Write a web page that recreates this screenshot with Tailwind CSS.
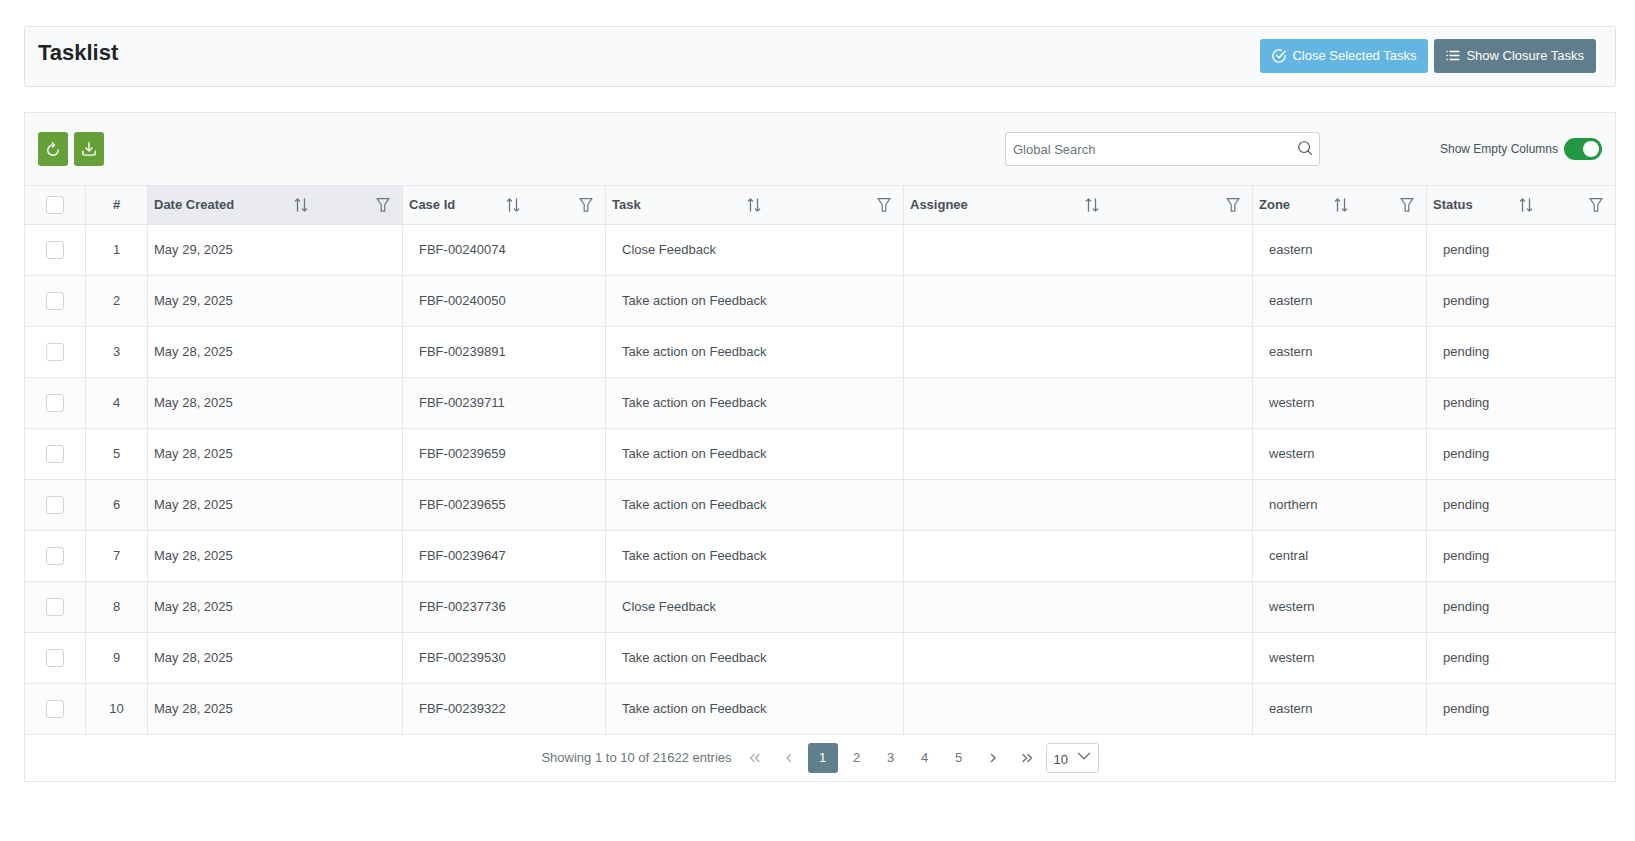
<!DOCTYPE html>
<html lang="en">

<head>
    <meta charset="UTF-8">
    <meta name="viewport" content="width=device-width, initial-scale=1.0">
    <title>Tasklist</title>
    <script src="https://cdn.jsdelivr.net/npm/@tailwindcss/browser@4"></script>
</head>

<body class="bg-white font-['Liberation_Sans',Arial,sans-serif] text-[13px] leading-5 text-[#495057]">
    <main class="pt-[26px] pb-6 pl-6 pr-[19px]">
        <!-- Page Header -->
        <header class="flex items-start justify-between rounded-[3px] border border-[#dee2e6] bg-[#f8fafc] pt-3 pb-[13px] pl-[13px] pr-[19px]">
            <h1 class="text-[22px] leading-7 font-bold text-[#212529]">Tasklist</h1>
            <div class="flex gap-1.5">
                <button type="button" class="flex h-[34px] items-center gap-1.5 rounded-[3px] bg-[#64b5e1] px-3 text-white">
                    <svg class="size-3.5" viewBox="0 0 16 16" fill="none" stroke="currentColor" stroke-width="1.5" stroke-linecap="round" stroke-linejoin="round">
                        <path d="M15 7.3V8a7 7 0 1 1-4.1-6.4" />
                        <path d="M5.2 7.2 8 10l7-7.4" />
                    </svg>
                    Close Selected Tasks
                </button>
                <button type="button" class="flex h-[34px] items-center gap-1.5 rounded-[3px] bg-[#607d8b] px-3 text-white">
                    <svg class="size-3.5" viewBox="0 0 14 14" fill="none" stroke="currentColor" stroke-width="1.3" stroke-linecap="round">
                        <path d="M4 2.5h9M4 6.5h9M4 10.5h9M1 2.5h.3M1 6.5h.3M1 10.5h.3" />
                    </svg>
                    Show Closure Tasks
                </button>
            </div>
        </header>

        <!-- Task Table -->
        <section class="mt-[25px] border border-[#e5e8eb]">
            <div class="flex items-center bg-[#f8fafc] px-[13px] py-[19px]">
                <div class="flex flex-1 gap-1.5">
                    <button type="button" aria-label="Refresh" class="flex h-[34px] w-[30px] items-center justify-center rounded-[3px] bg-[#66a038] text-white">
                        <svg class="size-3.5" viewBox="0 0 14 14" fill="none" stroke="currentColor" stroke-width="1.4" stroke-linecap="round" stroke-linejoin="round">
                            <path d="M8.2 2.9H7A5.2 5.2 0 1 0 12.2 8" />
                            <path d="M6.3.7 8.5 2.9 6.3 5.1" />
                        </svg>
                    </button>
                    <button type="button" aria-label="Download" class="flex h-[34px] w-[30px] items-center justify-center rounded-[3px] bg-[#66a038] text-white">
                        <svg class="size-3.5" viewBox="0 0 14 14" fill="none" stroke="currentColor" stroke-width="1.4" stroke-linecap="round" stroke-linejoin="round">
                            <path d="M7 .8v8M4 6l3 3 3-3" />
                            <path d="M.8 9.2v2.2a1.7 1.7 0 0 0 1.7 1.7h9a1.7 1.7 0 0 0 1.7-1.7V9.2" />
                        </svg>
                    </button>
                </div>
                <div class="relative w-[315px]">
                    <input type="text" aria-label="Global Search" placeholder="Global Search" class="h-[34px] w-full rounded-[3px] border border-[#ced4da] bg-white pl-[7px] pr-8 outline-none placeholder:text-[#6c757d]">
                    <svg class="pointer-events-none absolute top-[9px] right-2 size-3.5" viewBox="0 0 14 14" fill="none" stroke="currentColor" stroke-width="1.1" stroke-linecap="round">
                        <circle cx="6.1" cy="6.1" r="5.4" />
                        <path d="m10 10 3.4 3.4" />
                    </svg>
                </div>
                <label class="flex w-[282px] items-center justify-end gap-1.5 text-xs">
                    Show Empty Columns
                    <input type="checkbox" role="switch" checked class="peer sr-only">
                    <span class="flex h-[22px] w-[38px] items-center justify-end rounded-full bg-[#239843] px-[3px]">
                        <span class="size-4 rounded-full bg-white"></span>
                    </span>
                </label>
            </div>

            <table class="w-full table-fixed border-separate border-spacing-0 text-left">
                <colgroup>
                    <col class="w-[61px]">
                    <col class="w-[62px]">
                    <col class="w-[255px]">
                    <col class="w-[203px]">
                    <col class="w-[298px]">
                    <col class="w-[349px]">
                    <col class="w-[174px]">
                    <col class="w-[188px]">
                </colgroup>
                <thead>
                    <tr id="headRow" class="h-10 bg-[#f8fafc]">
                        <th class="border-y border-r border-[#e5e8eb]">
                            <input type="checkbox" aria-label="Select all" class="mx-auto block size-[18px] appearance-none rounded-[3px] border border-[#ced4da] bg-white checked:bg-[#607d8b]">
                        </th>
                        <th class="border-y border-r border-[#e5e8eb] text-center">#</th>
                    </tr>
                </thead>
                <tbody id="taskRows"></tbody>
            </table>

            <!-- Paginator -->
            <nav id="paginator" aria-label="Pagination" class="flex items-center justify-center gap-1 py-2 text-[#6c757d]">
                <span class="mr-1">Showing 1 to 10 of 21622 entries</span>
                <button type="button" aria-label="First page" disabled class="flex size-[30px] items-center justify-center opacity-60">
                    <svg class="size-3.5" viewBox="0 0 14 14" fill="none" stroke="currentColor" stroke-width="1.3" stroke-linecap="round" stroke-linejoin="round"><path d="M6 3.5 2.5 7 6 10.5M11 3.5 7.5 7 11 10.5" /></svg>
                </button>
                <button type="button" aria-label="Previous page" disabled class="flex size-[30px] items-center justify-center opacity-60">
                    <svg class="size-3.5" viewBox="0 0 14 14" fill="none" stroke="currentColor" stroke-width="1.3" stroke-linecap="round" stroke-linejoin="round"><path d="M8.5 3.5 5 7l3.5 3.5" /></svg>
                </button>
                <button type="button" aria-current="page" class="size-[30px] rounded-[3px] bg-[#607f8d] text-white">1</button>
                <button type="button" class="size-[30px]">2</button>
                <button type="button" class="size-[30px]">3</button>
                <button type="button" class="size-[30px]">4</button>
                <button type="button" class="size-[30px]">5</button>
                <button type="button" aria-label="Next page" class="flex size-[30px] items-center justify-center">
                    <svg class="size-3.5" viewBox="0 0 14 14" fill="none" stroke="currentColor" stroke-width="1.5" stroke-linecap="round" stroke-linejoin="round"><path d="M5.5 3.5 9 7l-3.5 3.5" /></svg>
                </button>
                <button type="button" aria-label="Last page" class="flex size-[30px] items-center justify-center">
                    <svg class="size-3.5" viewBox="0 0 14 14" fill="none" stroke="currentColor" stroke-width="1.5" stroke-linecap="round" stroke-linejoin="round"><path d="M3 3.5 6.5 7 3 10.5M8 3.5 11.5 7 8 10.5" /></svg>
                </button>
                <div class="relative">
                    <select aria-label="Rows per page" class="block h-[30px] w-[53px] appearance-none rounded-[3px] border border-[#ced4da] bg-white pt-1 pl-[7px] text-[#495057]">
                        <option>10</option>
                        <option>25</option>
                        <option>50</option>
                    </select>
                    <svg class="pointer-events-none absolute top-1.5 right-2 size-3.5" viewBox="0 0 14 14" fill="none" stroke="currentColor" stroke-width="1.4" stroke-linecap="round" stroke-linejoin="round"><path d="M1.5 4.3 7 9.8l5.5-5.5" /></svg>
                </div>
            </nav>
        </section>
    </main>

    <script>
        const columns = ['Date Created', 'Case Id', 'Task', 'Assignee', 'Zone', 'Status'];

        const tasks = [
            { date: 'May 29, 2025', caseId: 'FBF-00240074', task: 'Close Feedback', zone: 'eastern' },
            { date: 'May 29, 2025', caseId: 'FBF-00240050', task: 'Take action on Feedback', zone: 'eastern' },
            { date: 'May 28, 2025', caseId: 'FBF-00239891', task: 'Take action on Feedback', zone: 'eastern' },
            { date: 'May 28, 2025', caseId: 'FBF-00239711', task: 'Take action on Feedback', zone: 'western' },
            { date: 'May 28, 2025', caseId: 'FBF-00239659', task: 'Take action on Feedback', zone: 'western' },
            { date: 'May 28, 2025', caseId: 'FBF-00239655', task: 'Take action on Feedback', zone: 'northern' },
            { date: 'May 28, 2025', caseId: 'FBF-00239647', task: 'Take action on Feedback', zone: 'central' },
            { date: 'May 28, 2025', caseId: 'FBF-00237736', task: 'Close Feedback', zone: 'western' },
            { date: 'May 28, 2025', caseId: 'FBF-00239530', task: 'Take action on Feedback', zone: 'western' },
            { date: 'May 28, 2025', caseId: 'FBF-00239322', task: 'Take action on Feedback', zone: 'eastern' }
        ];

        const renderHeader = () => {
            document.getElementById('headRow').innerHTML += columns.map((name, i) => `
                <th class="border-y border-r border-[#e5e8eb] pl-1.5 pr-[3px] last:border-r-0 ${i === 0 ? 'bg-[#e9ebee]' : ''}">
                    <div class="flex items-center justify-between">
                        <span>${name}</span>
                        <button type="button" aria-label="Sort by ${name}" class="text-[#6c757d]">
                            <svg class="size-3.5" viewBox="0 0 14 14" fill="none" stroke="currentColor" stroke-width="1.3" stroke-linecap="round" stroke-linejoin="round">
                                <path d="M3.5 13.2V.9M1.3 3.1 3.5.9l2.2 2.2M10.5.8v12.3M8.3 10.9l2.2 2.2 2.2-2.2" />
                            </svg>
                        </button>
                        <button type="button" aria-label="Filter ${name}" class="flex w-8 justify-center text-[#6c757d]">
                            <svg class="size-3.5" viewBox="0 0 14 14" fill="none" stroke="currentColor" stroke-width="1.2" stroke-linejoin="round">
                                <path d="M1 .7h12L8.8 6.5v6.6H5.2V6.5z" />
                            </svg>
                        </button>
                    </div>
                </th>
            `).join('');
        };

        const renderTasks = () => {
            document.getElementById('taskRows').innerHTML = tasks.map((row, i) => `
                <tr class="h-[51px] even:bg-[#fcfcfc]">
                    <td class="border-r border-b border-[#e5e8eb]">
                        <input type="checkbox" aria-label="Select task ${i + 1}" class="mx-auto block size-[18px] appearance-none rounded-[3px] border border-[#ced4da] bg-white checked:bg-[#607d8b]">
                    </td>
                    <td class="border-r border-b border-[#e5e8eb] text-center">${i + 1}</td>
                    <td class="border-r border-b border-[#e5e8eb] pl-1.5">${row.date}</td>
                    <td class="border-r border-b border-[#e5e8eb] pl-4">${row.caseId}</td>
                    <td class="border-r border-b border-[#e5e8eb] pl-4">${row.task}</td>
                    <td class="border-r border-b border-[#e5e8eb] pl-4"></td>
                    <td class="border-r border-b border-[#e5e8eb] pl-4">${row.zone}</td>
                    <td class="border-b border-[#e5e8eb] pl-4">pending</td>
                </tr>
            `).join('');
        };

        renderHeader();
        renderTasks();
    </script>
</body>

</html>
